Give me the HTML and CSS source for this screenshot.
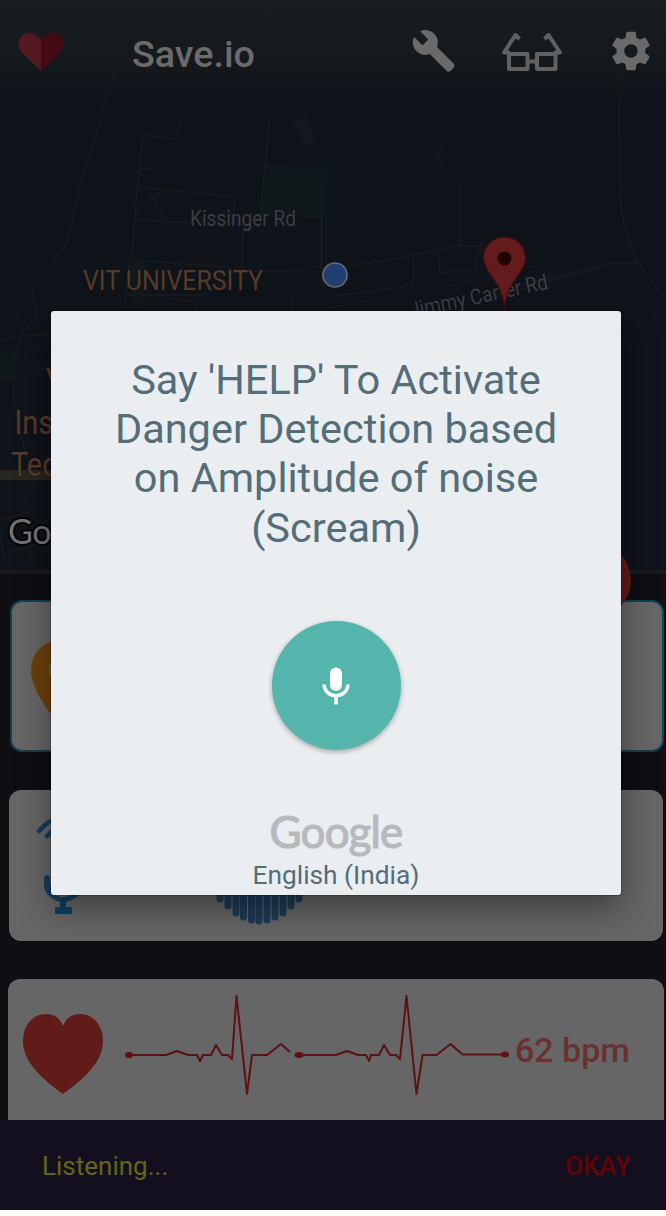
FILE: index.html
```
<!DOCTYPE html>
<html lang="en">
<head>
<meta charset="utf-8">
<title>Save.io</title>
<link rel="stylesheet" href="styles.css">
</head>
<body>
<div class="screen">
  <section class="map">
    <svg class="map-canvas" width="666" height="570" viewBox="0 0 666 570">
      <path class="park" d="M267 163l60 7-2 46-65-1zM131 262h14l-1 46h-13zM0 353h18v27H0z"/>
      <path class="block" d="M294 121l14-4 8 26-13 4z"/>
      <path class="rail" d="M333 307l108-20 130-28 95-27M0 347l50-2"/>
      <g class="roads">
        <path d="M124 47l-20 60-24 80-13 57-15 20-17 18-3 13 4 12v9l-12 15-9 25-1 45 5 27 9 34 4 15v18"/>
        <path class="faint" d="M95 18l12 16 17 11 23 4M150 38l18-20M265 10v22l20 15 18 10 12-4 15-20"/>
        <path d="M181 115l-4 24-34-4-6 55-4 55-5 30-3 33M139 169h9l8-2M137 187l97 10v23M148 190l17 30M163 190l-8 9M134 219l34 3h75l-1 49 79 1V218M131 260l84 6 28 5M126 295h75l22-10M168 298l28 4 2 10M270 115l-10 100 62 2v65q2 10 10 13M292 300v10"/>
        <path d="M472 144h-29l-5 12 4 14 13 8 5 8v59l-60 13-65 10-5 3M460 246h24M438 252l2 21 36-4 1-15 6-5M413 257l1 20-2 8-50 8-29 3"/>
        <path d="M623 20l-4 65v45l2 80 6 26 11 27 28 37M640 263h-32l-58 15-50 12M606 266l-57 15-60 18"/>
        <path d="M0 340l20-4 30-2M20 368h30M0 379l18-1M0 520l35-10M0 535l5 25M10 551l40-9M28 550l5 15"/>
      </g>
      <path class="highway" d="M0 475h52"/>
      <text class="road-label" x="190" y="226" textLength="106" lengthAdjust="spacingAndGlyphs">Kissinger Rd</text>
      <text class="road-label" transform="translate(411 318) rotate(-12)" x="0" y="0" textLength="141" lengthAdjust="spacingAndGlyphs">Jimmy Carter Rd</text>
      <g class="place-label">
        <text x="83" y="290" textLength="180" lengthAdjust="spacingAndGlyphs">VIT UNIVERSITY</text>
        <g class="place-label-large">
          <text transform="translate(46 392) scale(.85 1)">V</text>
          <text transform="translate(14.500 434) scale(.85 1)">Ins</text>
          <text transform="translate(11 475.500) scale(.85 1)">Tec</text>
        </g>
      </g>
      <text class="map-brand" x="8" y="544">Go</text>
      <circle cx="335" cy="275" r="12" fill="#213f73" stroke="#67696c" stroke-width="1.700"/>
      <path d="M504.500 312c-1-20-6-26-13-36-5-7-8-12-8-18a21 21 0 0 1 42 0c0 6-3 11-8 18-7 10-12 16-13 36z" fill="#641b1c" stroke="#480c0e" stroke-width="1.200"/>
      <circle cx="504.500" cy="258.500" r="7" fill="#210204"/>
    </svg>
    <header class="appbar">
      <svg class="logo" width="46" height="38" viewBox="0 0 46 38">
        <path fill="#541920" d="M23 38L3.500 19.500C-1 14 0 7 4 3c5-4 10-4 14-1l5 4z"/>
        <path fill="#440b16" d="M23 38L42.500 19.500C47 14 46 7 42 3c-5-4-10-4-14-1l-5 4z"/>
      </svg>
      <h1 class="title">Save.io</h1>
      <nav class="actions">
        <svg class="wrench" width="46" height="46" viewBox="0 0 24 24"><path fill="#6a6a6a" d="M22.700 19l-9.100-9.100c.9-2.300.4-5-1.500-6.900-2-2-5-2.400-7.400-1.300L9 6 6 9 1.600 4.700C.4 7.100.9 10.100 2.900 12.100c1.900 1.900 4.600 2.400 6.900 1.500l9.100 9.100 1.400 0 2.300-2.300z"/></svg>
        <svg class="glasses" width="62" height="40" viewBox="0 0 62 40" fill="none" stroke="#616162" stroke-width="4"><path d="M8 22h18.500v15H8zM36 22h18.500v15H36zM26 29.500H36M9 20.500H3L14.500 3l4 4M53 20.500h6L47.500 3l-4 4" stroke-linejoin="round"/></svg>
        <svg class="gear" width="46" height="46" viewBox="0 0 24 24"><path fill="#6a6a6a" d="M19.430 12.980c.04-.32.070-.64.070-.98s-.03-.66-.07-.98l2.110-1.650c.19-.15.240-.42.120-.64l-2-3.460c-.12-.22-.39-.3-.61-.22l-2.490 1c-.52-.4-1.080-.73-1.690-.98l-.38-2.650C14.460 2.180 14.250 2 14 2h-4c-.25 0-.46.180-.49.420l-.38 2.650c-.61.250-1.170.590-1.690.980l-2.490-1c-.23-.09-.49 0-.61.220l-2 3.460c-.13.220-.07.490.12.640l2.110 1.650c-.04.320-.07.650-.07.980s.03.660.07.980l-2.110 1.650c-.19.150-.24.420-.12.640l2 3.460c.12.220.39.300.61.220l2.490-1c.52.400 1.080.730 1.690.980l.38 2.650c.03.240.24.420.49.420h4c.25 0 .46-.18.490-.42l.38-2.650c.61-.25 1.170-.59 1.690-.98l2.490 1c.23.090.49 0 .61-.22l2-3.460c.12-.22.070-.49-.12-.64l-2.110-1.650zM12 15.500c-1.930 0-3.500-1.570-3.500-3.500s1.570-3.500 3.500-3.500 3.500 1.570 3.500 3.500-1.570 3.500-3.500 3.500z"/></svg>
      </nav>
    </header>
    <span class="fab"></span>
  </section>

  <main class="cards">
    <article class="card card-location">
      <svg width="70" height="100" viewBox="0 0 70 100"><path fill="#6b400a" d="M35 0C15 0 1 13 1 31c0 16 10 32 34 63 24-31 34-47 34-63C69 13 55 0 35 0z"/><circle cx="35" cy="31" r="16" fill="#666"/></svg>
    </article>
    <article class="card card-voice">
      <svg class="voice-mic" width="60" height="106" viewBox="0 0 60 106">
        <g fill="none" stroke="#123f61" stroke-width="4.500" stroke-linecap="round"><path d="M5 21Q27-4 51 21M13 26Q27 10 41 26"/></g>
        <path fill="#123f61" d="M10 67q3-4 6 0v6q2 14 13 14t14-14v-6q3-4 6 0v7q-1 14-17 18v5h6v7H21v-7h5v-5Q10 87 10 74z"/>
      </svg>
      <svg class="wave" width="110" height="70" viewBox="0 0 110 70"><path stroke="#1c3b56" stroke-width="7" stroke-linecap="round" fill="none" d="M10 15v10M18 15v18M26 10v30M34 10v37M41.500 8v43M49.500 5v49M57 5v50M65 5v49M73 8v43M81 10v37M89 10v30M97 15v18M105 15v10"/></svg>
    </article>
    <article class="card card-heart">
      <svg class="heart" width="80" height="81" viewBox="0 0 80 81"><path fill="#611b19" d="M40 80C16 63 0 46 0 27 0 11 10 0 23 0c8 0 14 4 17 12C43 4 49 0 57 0c13 0 23 11 23 27 0 19-16 36-40 53z"/></svg>
      <svg class="ecg" width="386" height="104" viewBox="0 0 386 104" fill="none" stroke="#5e1013" stroke-width="2" stroke-linejoin="round">
        <path d="M4 62h37l11-4 11 4h9l3 6 3-6h8l5-10 6 10h6l4 4L111.500 3l10.500 98 5-39h15l14-11 9 8"/>
        <path d="M174 62h37l11-4 11 4h8l3 6 2-6h8l5-10 6 10h6l4 4L281.500 3l10 98 6-39h14l14-11 12 10.500h42"/>
        <g fill="#5e1013" stroke="none"><ellipse cx="4" cy="62" rx="4" ry="3"/><ellipse cx="174" cy="62" rx="4.500" ry="3"/><ellipse cx="380" cy="61.500" rx="4" ry="3"/></g>
      </svg>
      <span class="bpm">62 bpm</span>
    </article>
  </main>

  <footer class="snackbar">
    <span class="status">Listening...</span>
    <span class="okay">OKAY</span>
  </footer>

  <div class="dialog">
    <p class="prompt">Say 'HELP' To Activate<br>Danger Detection based<br>on Amplitude of noise<br>(Scream)</p>
    <div class="mic-button">
      <svg width="28" height="38" viewBox="0 0 28 38"><rect x="8" y="0.500" width="12" height="23.500" rx="6" fill="#fff"/><path d="M2 17.500c1 15 23 15 24 0M14 29v8.500" fill="none" stroke="#fff" stroke-width="3.600"/></svg>
    </div>
    <div class="brand">Google</div>
    <div class="language">English (India)</div>
  </div>
</div>
</body>
</html>
```

FILE: styles.css
```
* { box-sizing: border-box; }
body { margin: 0; background: #fdfdfd; font-family: Roboto, "Liberation Sans", sans-serif; }
.screen { position: relative; width: 666px; height: 1210px; display: flex; flex-direction: column; background: #0e0e13; overflow: hidden; }

.map { position: relative; height: 574px; flex: none; background: #0f131a; border-bottom: 4px solid #1a191e; }
.map-canvas { display: block; }
.roads { fill: none; stroke: #17191c; stroke-width: 2.200; stroke-linejoin: round; }
.roads .faint { stroke-width: 1.500; }
.rail { fill: none; stroke: #131922; stroke-width: 1.500; }
.park { fill: #0f181a; }
.block { fill: #131722; }
.highway { stroke: #29251f; stroke-width: 10; }
.road-label { font-size: 21.500px; fill: #3c3e41; stroke: #0f131a; stroke-width: 2px; paint-order: stroke; }
.place-label { font-size: 28px; fill: #573b29; stroke: #0f131a; stroke-width: 1px; paint-order: stroke; }
.place-label-large { font-size: 34px; }
.map-brand { font: 400 34px Lato, sans-serif; letter-spacing: -.5px; fill: #747474; stroke: #030405; stroke-width: 4px; paint-order: stroke; }

.appbar { position: absolute; top: 0; left: 0; width: 666px; height: 106px; padding: 0 12px 4px 18px; display: flex; align-items: center; background: linear-gradient(rgba(26, 31, 34, .9), rgba(20, 25, 28, .75) 70%, rgba(15, 19, 26, .2)); }
.logo { margin-top: 1px; }
.title { margin: 6px 0 0 68px; font-size: 37.700px; font-weight: 500; color: #6b6b6b; }
.actions { margin-left: auto; display: flex; align-items: center; }
.glasses { margin: 2px 45px 0 44px; }
.fab { position: absolute; left: 556px; top: 543px; width: 75px; height: 75px; border-radius: 50%; background: #601b1a; z-index: 1; }

.cards { flex: none; height: 546px; padding: 26px 2px 0 8px; display: flex; flex-direction: column; gap: 38px; overflow: hidden; }
.card { flex: none; height: 151px; border-radius: 12px; background: #666; overflow: hidden; }
.card-location { height: 152px; margin-left: 2px; padding: 37px 0 0 18px; border: 2px solid #163f53; }
.card-voice { display: flex; align-items: flex-start; padding: 20px 0 0 25px; margin: 0 1px; }
.wave { margin: 56px 0 0 108px; }
.card-heart { height: 141px; border-radius: 12px 12px 0 0; display: flex; align-items: flex-start; padding: 14px 0 0 15px; }
.heart { margin-top: 21px; }
.ecg { margin-left: 22px; }
.bpm { margin: 37px 0 0 4px; font-size: 34px; line-height: 41px; font-weight: 500; color: #6b302e; white-space: nowrap; }

.snackbar { flex: none; height: 90px; padding: 2px 35px 0 42px; display: flex; align-items: center; justify-content: space-between; background: #140f1e; font-size: 26px; }
.status { color: #64651c; }
.okay { color: #620407; font-weight: 500; }

.dialog { position: absolute; z-index: 2; left: 51px; top: 311px; width: 570px; height: 584px; padding-top: 44px; display: flex; flex-direction: column; align-items: center; background: #ebeef1; border-radius: 3px; box-shadow: 0 0 0 1px rgba(0, 0, 0, .2), 0 14px 34px rgba(0, 0, 0, .4); }
.prompt { margin: 0; font-size: 41.500px; line-height: 49.200px; color: #536d79; text-align: center; white-space: nowrap; }
.mic-button { width: 129px; height: 129px; margin-top: 69px; border-radius: 50%; background: #53b5ac; box-shadow: 0 2px 5px rgba(0, 0, 0, .3); display: flex; align-items: center; justify-content: center; padding-top: 2px; }
.brand { margin-top: 54px; font: 400 44px/54px Lato, sans-serif; letter-spacing: -.9px; color: #b6babc; -webkit-text-stroke: 1.200px #b6babc; }
.language { margin-top: 2px; font-size: 26.300px; line-height: 30px; color: #536d79; }
```
